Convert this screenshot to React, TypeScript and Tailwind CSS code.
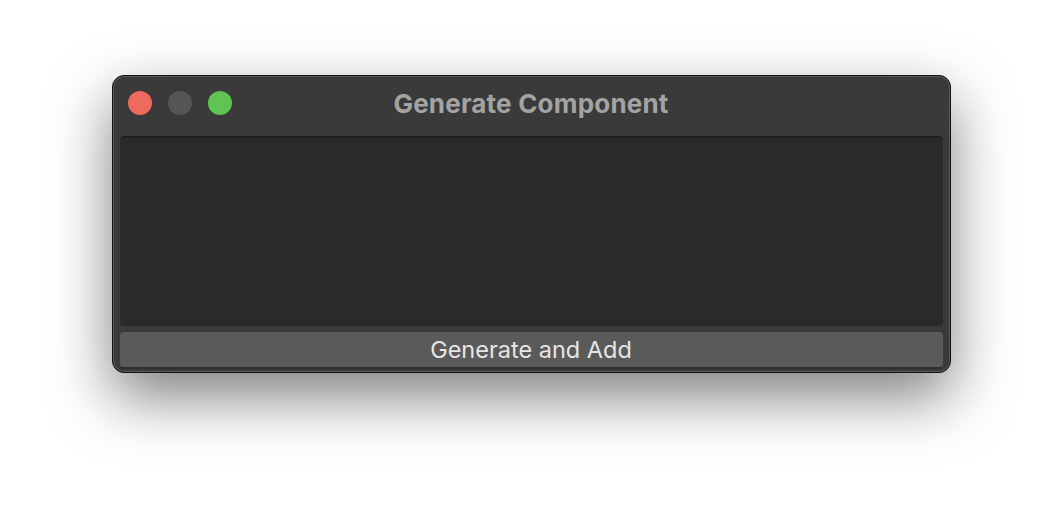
export default function App() {
  return (
    <div className="min-h-[520px] w-full bg-white flex justify-center pt-[75px] font-['Inter',sans-serif]">
      <div className="w-[839px] h-[298px] rounded-[12px] bg-[#3a3a3a] border border-[#141414] shadow-[0_24px_60px_rgba(0,0,0,0.5)] flex flex-col px-[7px] pb-[3px] ring-1 ring-inset ring-[#5a5a5a]">
        <div className="relative h-[60px] flex items-center shrink-0 pb-[6px]">
          <div className="flex gap-[16px] pl-[8px]">
            <span className="w-[24px] h-[24px] rounded-full bg-[#ee6a5e]" />
            <span className="w-[24px] h-[24px] rounded-full bg-[#555555]" />
            <span className="w-[24px] h-[24px] rounded-full bg-[#5fc454]" />
          </div>
          <div className="absolute inset-0 flex items-center justify-center pb-[6px]">
            <span className="text-[26px] font-bold text-[#a3a3a3] tracking-[0.2px]">Generate Component</span>
          </div>
        </div>
        <div className="flex-1 rounded-[4px] bg-[#2a2a2a] border-t-2 border-[#1e1e1e]" />
        <button className="mt-[6px] h-[37px] shrink-0 rounded-[4px] bg-[#5a5a5a] border-b-2 border-[#2e2e2e] text-[23.5px] text-[#e6e6e6] flex items-center justify-center">
          Generate and Add
        </button>
      </div>
    </div>
  );
}
